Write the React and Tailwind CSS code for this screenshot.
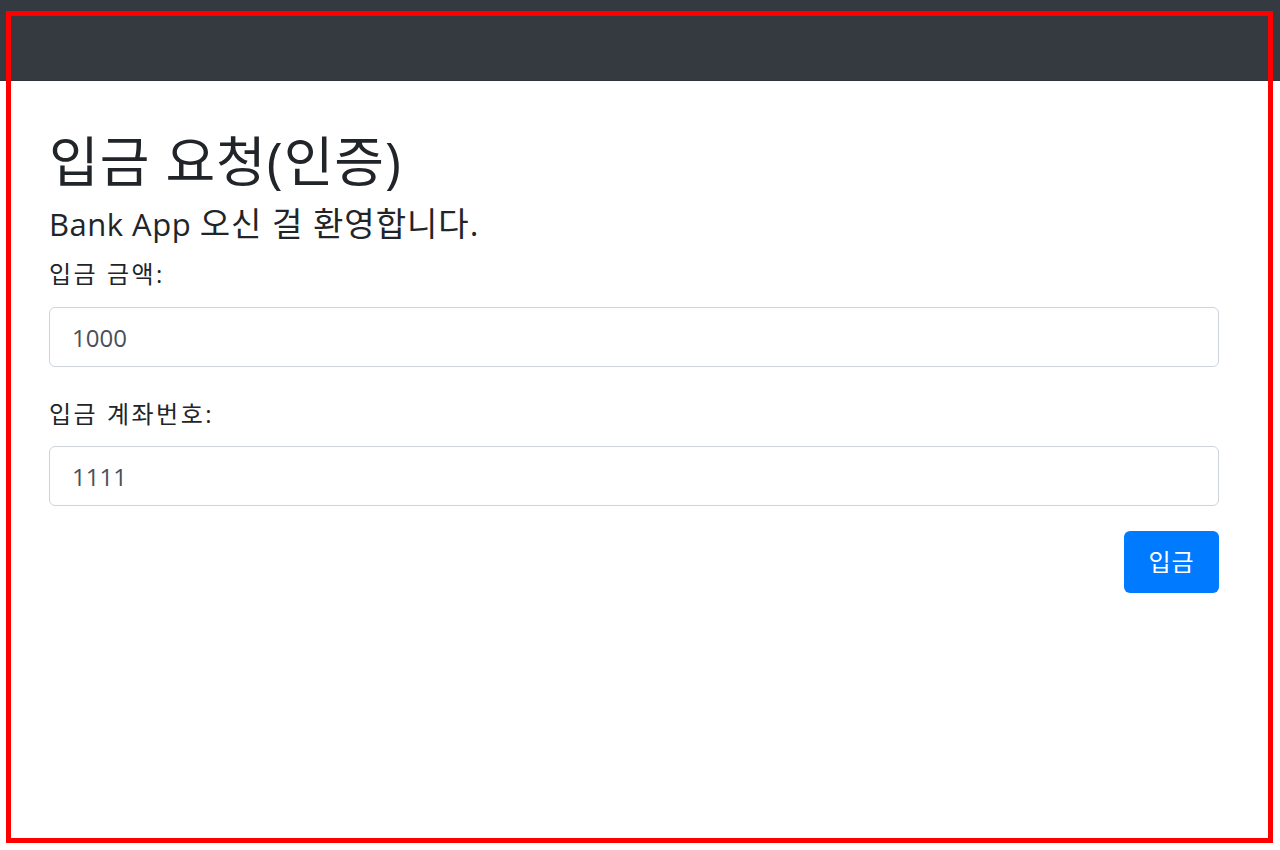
export default function App() {
  const font = { fontFamily: '"Open Sans", "Noto Sans CJK KR", sans-serif' };
  return (
    <div className="relative w-[1280px] h-[850px] bg-white overflow-hidden" style={font}>
      <div className="h-[81px] bg-[#343a40] border-b border-[#2f343a]"></div>
      <div className="pl-[49px] pr-[61px] pt-[48px]">
        <h1 className="text-[54px] leading-[64px] tracking-[1px] text-[#212529] font-normal">입금 요청(인증)</h1>
        <h4 className="text-[31px] leading-[38px] tracking-[0.5px] text-[#212529] font-normal mt-[12px]">
          Bank App <span className="text-[33px] tracking-[1px]">오신 걸 환영합니다.</span>
        </h4>
        <form className="mt-[16px]">
          <label className="block text-[24px] leading-[30px] tracking-[2.5px] text-[#212529]">입금 금액:</label>
          <input
            className="block mt-[18px] w-full h-[60px] px-[22px] text-[24px] text-[#495057] border border-[#ced4da] rounded-[6px] outline-none"
            defaultValue="1000"
            style={font}
          />
          <label className="block mt-[32px] text-[24px] leading-[30px] tracking-[2.5px] text-[#212529]">입금 계좌번호:</label>
          <input
            className="block mt-[17px] w-full h-[60px] px-[22px] text-[24px] text-[#495057] border border-[#ced4da] rounded-[6px] outline-none"
            defaultValue="1111"
            style={font}
          />
          <div className="flex justify-end mt-[25px]">
            <button
              type="button"
              className="w-[95px] h-[62px] bg-[#007bff] text-white text-[24px] tracking-[1px] rounded-[6px]"
              style={font}
            >
              입금
            </button>
          </div>
        </form>
      </div>
      <div className="absolute left-[6px] top-[11px] w-[1267px] h-[832px] border-[5px] border-[#ff0000] pointer-events-none"></div>
    </div>
  );
}
